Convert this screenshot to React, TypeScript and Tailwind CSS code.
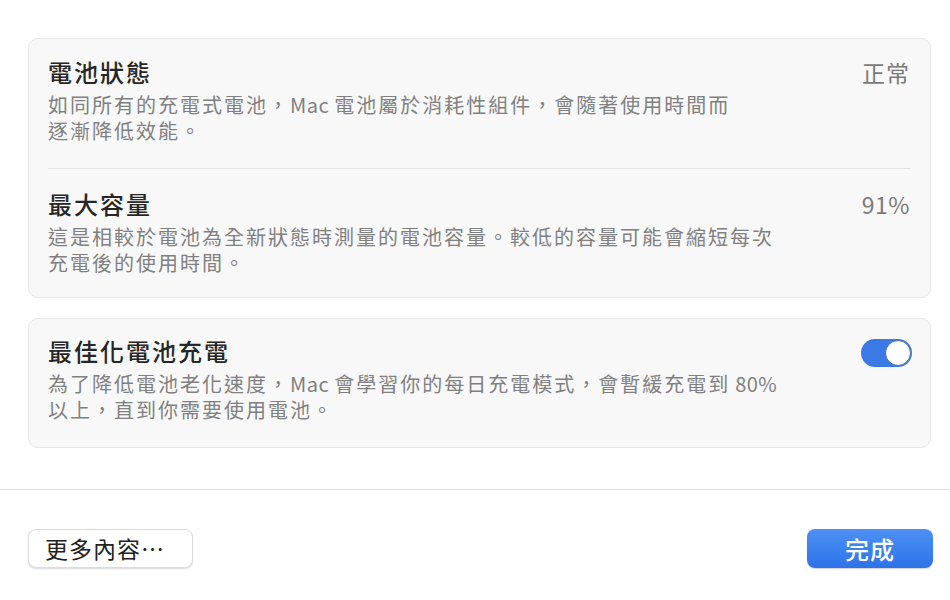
import React from "react";

function Toggle() {
  return (
    <div className="mt-[3px] flex h-[28px] w-[51px] shrink-0 items-center justify-end rounded-full bg-[#3a7ae6] p-[1px]">
      <div className="h-[26px] w-[26px] rounded-full border-[1.5px] border-[#4a6c9c] bg-white" />
    </div>
  );
}

export default function App() {
  return (
    <div className="h-[600px] w-[950px] bg-white font-['Noto_Sans_CJK_TC','Noto_Sans',sans-serif] text-[#262626]">
      <div className="pl-[28px] pr-[19px] pt-[38px]">
        {/* Card 1 */}
        <div className="rounded-[10px] border border-[#e6e6e6] bg-[#f8f8f8]">
          <div className="flex items-start justify-between pb-[24px] pl-[19px] pr-[20px] pt-[18px]">
            <div>
              <div className="text-[24px] font-medium leading-[30px] tracking-[2px]">電池狀態</div>
              <div className="mt-[5px] text-[20px] leading-[26px] tracking-[2px] text-[#808080]">
                <div>
                  如同所有的充電式電池，<span className="tracking-[0.5px]">Mac </span>電池屬於消耗性組件，會隨著使用時間而
                </div>
                <div>逐漸降低效能。</div>
              </div>
            </div>
            <div className="text-[23px] leading-[30px] tracking-[1px] text-[#7a7a7a]">正常</div>
          </div>
          <div className="mx-[19px] h-px bg-[#e3e3e3]" />
          <div className="flex items-start justify-between pb-[21px] pl-[19px] pr-[20px] pt-[20px]">
            <div>
              <div className="text-[24px] font-medium leading-[30px] tracking-[2px]">最大容量</div>
              <div className="mt-[5px] text-[20px] leading-[26px] tracking-[2px] text-[#808080]">
                <div>這是相較於電池為全新狀態時測量的電池容量。較低的容量可能會縮短每次</div>
                <div>充電後的使用時間。</div>
              </div>
            </div>
            <div className="text-[23px] leading-[30px] tracking-[0.5px] text-[#7a7a7a]">91%</div>
          </div>
        </div>

        {/* Card 2 */}
        <div className="mt-[20px] rounded-[10px] border border-[#e6e6e6] bg-[#f8f8f8]">
          <div className="flex items-start justify-between pb-[24px] pl-[19px] pr-[18px] pt-[17px]">
            <div>
              <div className="text-[24px] font-medium leading-[30px] tracking-[2px]">最佳化電池充電</div>
              <div className="mt-[5px] text-[20px] leading-[26px] tracking-[2px] text-[#808080]">
                <div>
                  為了降低電池老化速度，<span className="tracking-[0.5px]">Mac </span>會學習你的每日充電模式，會暫緩充電到
                  <span className="tracking-[0.5px]"> 80%</span>
                </div>
                <div>以上，直到你需要使用電池。</div>
              </div>
            </div>
            <Toggle />
          </div>
        </div>
      </div>

      <div className="mt-[41px] h-px w-full bg-[#e2e2e2]" />

      <div className="flex items-center justify-between pl-[28px] pr-[17px] pt-[39px]">
        <button className="flex h-[39px] w-[165px] items-center rounded-[8px] border border-[#dcdcdc] bg-white pl-[16px] text-[23px] tracking-[1px] text-[#222] shadow-[0_1px_1.5px_rgba(0,0,0,0.15)]">
          更多內容⋯
        </button>
        <button className="flex h-[39px] w-[126px] items-center justify-center rounded-[8px] bg-gradient-to-b from-[#4d90f5] to-[#2d73e8] text-[24px] font-medium tracking-[1px] text-white shadow-[0_1px_1.5px_rgba(0,0,0,0.2)]">
          完成
        </button>
      </div>
    </div>
  );
}
